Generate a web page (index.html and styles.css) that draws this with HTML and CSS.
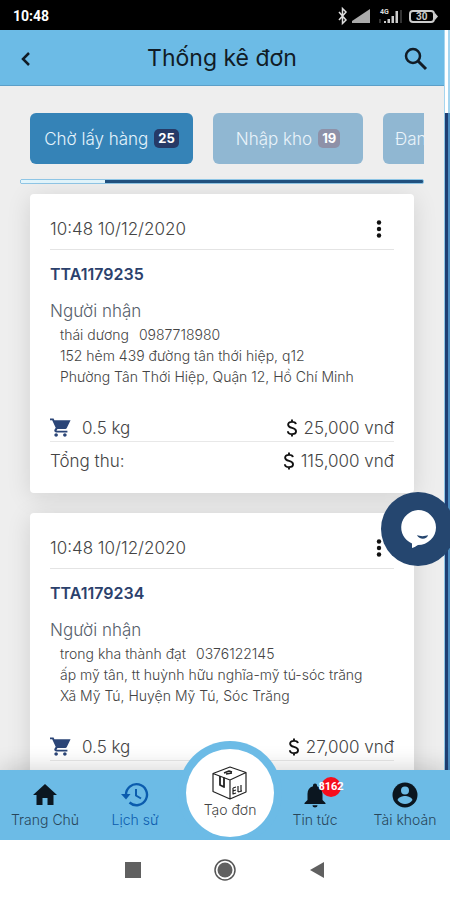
FILE: index.html
```html
<!DOCTYPE html>
<html lang="vi">
<head>
<meta charset="utf-8">
<meta name="viewport" content="width=device-width, initial-scale=1">
<title>Thống kê đơn</title>
<link rel="stylesheet" href="styles.css">
</head>
<body>
<svg class="defs" aria-hidden="true">
  <symbol id="cart" viewBox="0 0 24 24"><path d="M7 18c-1.100 0-2 .9-2 2s.9 2 2 2 2-.9 2-2-.9-2-2-2zM0 1v2h2.500l4 8.600-1.400 2.400c-.7 1.300.3 3 1.800 3h13v-2H7.400l1.100-2h9c.8 0 1.400-.4 1.700-1L23.500 3H5l-.9-2H0zm17 17c-1.100 0-2 .9-2 2s.9 2 2 2 2-.9 2-2-.9-2-2-2z"/></symbol>
  <symbol id="dollar" viewBox="0 0 14 22"><path d="M11.500 6.500C11.300 4.600 9.500 3.800 7 3.800S2.500 5 2.500 7.200c0 2.500 2.100 3.100 4.500 3.700s4.700 1.300 4.700 3.900c0 2.200-2 3.400-4.700 3.400s-4.700-1.200-4.800-3.400M7 1v3M7 18v3" fill="none" stroke="currentColor" stroke-width="2.200"/></symbol>
  <symbol id="dots" viewBox="0 0 6 20"><circle cx="3" cy="3.500" r="2.200"/><circle cx="3" cy="10" r="2.200"/><circle cx="3" cy="16.500" r="2.200"/></symbol>
</svg>
<div class="phone">
  <div class="status">
    <time>10:48</time>
    <svg class="status-icons" width="104" height="20" viewBox="0 0 104 20">
      <path d="M3 6l7 8-3.500 3.500V2.500L10 6l-7 8" fill="none" stroke="#ddd" stroke-width="1.500"/>
      <path d="M16 17v-2l18-12v14z" fill="#aaa"/>
      <path d="M48 17h2v-2h-2zM51.500 17h2.500v-4h-2.500zM55.500 17h2.500v-7h-2.500zM59.500 17h2.500V5h-2.500z" fill="#ccc"/>
      <path d="M43 17h2v-4h-2zM64 17h2V4h-2z" fill="#333"/>
      <text x="44" y="8" class="tiny">4G</text>
      <rect x="74" y="5" width="24" height="11" rx="3" fill="none" stroke="#ccc" stroke-width="2"/>
      <path d="M99 7l3 3.500-3 3.500z" fill="#ccc"/>
      <text x="80" y="14" class="charge">30</text>
    </svg>
  </div>
  <div class="view">
    <div class="page">
      <header class="appbar">
        <button class="icon-btn" aria-label="Quay lại"><svg width="24" height="28" viewBox="0 0 24 28"><path d="M15 9l-6 6 6 6" fill="none" stroke="currentColor" stroke-width="2.500"/></svg></button>
        <h1>Thống kê đơn</h1>
        <button class="icon-btn" aria-label="Tìm kiếm"><svg width="28" height="28" viewBox="0 0 28 28"><circle cx="11" cy="12" r="7" fill="none" stroke="currentColor" stroke-width="2.500"/><path d="M16 17l8 8" stroke="currentColor" stroke-width="3"/></svg></button>
      </header>
      <div class="tabs">
        <button class="tab active">Chờ lấy hàng <span class="count">25</span></button>
        <button class="tab">Nhập kho <span class="count">19</span></button>
        <button class="tab cut">Đang giao</button>
      </div>
      <div class="track"><span></span></div>
      <main class="orders">
        <article class="card">
          <div class="row when"><time>10:48 10/12/2020</time><button class="more" aria-label="Thêm"><svg width="6" height="20"><use href="#dots"/></svg></button></div>
          <h2>TTA1179235</h2>
          <h3>Người nhận</h3>
          <address>
            <p><span>thái dương</span><span>0987718980</span></p>
            <p>152 hẻm 439 đường tân thới hiệp, q12</p>
            <p>Phường Tân Thới Hiệp, Quận 12, Hồ Chí Minh</p>
          </address>
          <div class="row weight"><span class="item"><svg class="cart" width="21" height="22"><use href="#cart"/></svg>0.5 kg</span><span class="money"><svg width="12" height="20"><use href="#dollar"/></svg>25,000 vnđ</span></div>
          <div class="row total"><span>Tổng thu:</span><span class="money"><svg width="12" height="20"><use href="#dollar"/></svg>115,000 vnđ</span></div>
        </article>
        <article class="card">
          <div class="row when"><time>10:48 10/12/2020</time><button class="more" aria-label="Thêm"><svg width="6" height="20"><use href="#dots"/></svg></button></div>
          <h2>TTA1179234</h2>
          <h3>Người nhận</h3>
          <address>
            <p><span>trong kha thành đạt</span><span>0376122145</span></p>
            <p>ấp mỹ tân, tt huỳnh hữu nghĩa-mỹ tú-sóc trăng</p>
            <p>Xã Mỹ Tú, Huyện Mỹ Tú, Sóc Trăng</p>
          </address>
          <div class="row weight"><span class="item"><svg class="cart" width="21" height="22"><use href="#cart"/></svg>0.5 kg</span><span class="money"><svg width="12" height="20"><use href="#dollar"/></svg>27,000 vnđ</span></div>
          <div class="row total"><span class="money end"><svg width="12" height="20"><use href="#dollar"/></svg></span></div>
        </article>
      </main>
    </div>
    <div class="scroll"><span></span></div>
    <button class="chat" aria-label="Trò chuyện"><svg width="38" height="40" viewBox="0 0 38 40"><path d="M19 1a18 17.500 0 0 1 0 35c-1.500 1-4 2.500-6 3v-4.500A18 17.500 0 0 1 19 1z" fill="#fff"/><path d="M18 26c3 1.500 8 1.500 11 0-1 5-9 5-11 0z" fill="#25466f"/></svg></button>
  </div>
  <nav class="bottom">
    <a href="#"><svg width="26" height="26" viewBox="0 0 26 26"><path d="M13 2l12 11h-3.500v10h-6v-7h-5v7h-6V13H1z" fill="#0b1620"/></svg>Trang Chủ</a>
    <a href="#" class="current"><svg width="28" height="26" viewBox="0 0 28 26"><path d="M5 13a10.500 10.500 0 1 1 3.500 7.500" fill="none" stroke="currentColor" stroke-width="2.400"/><path d="M0 12h9.500L5 17.500z" fill="currentColor"/><path d="M15 7v6.500l5 3" fill="none" stroke="currentColor" stroke-width="2"/></svg>Lịch sử</a>
    <a href="#" class="create"><svg width="36" height="36" viewBox="0 0 36 36" fill="none" stroke="#222" stroke-width="1.200" stroke-linejoin="round"><path d="M1 8.500L18 2l16 5.500V27l-16 7-17-7.500zM1 8.500L18 15l16-7.500M18 15v19"/><path d="M8 11v9l4 2v-9.500" stroke-width="1.800"/><path d="M12 8l5-2 3 1M14 9l6-1" stroke-width="1.500"/><path d="M21 23v6l3-1M21 23l3-1M21 26l3-1M26 21v6M29 20v6M26 27l4-1"/></svg>Tạo đơn</a>
    <a href="#" class="news"><svg width="24" height="26" viewBox="0 0 24 26"><path d="M12 1.500c1.200 0 2 .8 2 2v.7c3.600 1 5.500 4 5.500 7.800v6l3 3V22h-21v-1l3-3v-6c0-3.800 1.900-6.800 5.500-7.800v-.7c0-1.200.8-2 2-2zM9.500 23.300h5c0 3-5 3-5 0z" fill="#0b1620"/></svg><span class="badge">8162</span>Tin tức</a>
    <a href="#"><svg width="26" height="26" viewBox="0 0 26 26"><circle cx="13" cy="13" r="12.500" fill="#0b1620"/><circle cx="13" cy="8.500" r="4" fill="#6cbbe6"/><path d="M5.500 18c1-3 5-4 7.500-4s6.500 1 7.500 4c-3.500 5.300-11.500 5.300-15 0z" fill="#6cbbe6"/></svg>Tài khoản</a>
  </nav>
  <div class="system">
    <button aria-label="Gần đây"><svg width="16" height="16"><rect width="16" height="16" fill="#606060"/></svg></button>
    <button aria-label="Màn hình chính"><svg width="22" height="22" viewBox="0 0 22 22"><circle cx="11" cy="11" r="10" fill="none" stroke="#555" stroke-width="1.500"/><circle cx="11" cy="11" r="7.500" fill="#606060"/></svg></button>
    <button aria-label="Trở về"><svg width="16" height="18"><path d="M15 1v16L1 9z" fill="#606060"/></svg></button>
  </div>
</div>
</body>
</html>
```
FILE: styles.css
```css
* { box-sizing: border-box; margin: 0; padding: 0; }
body { font-family: Inter, "Noto Sans", sans-serif; font-weight: 300; color: #444; background: #fff; }
button { font: inherit; border: 0; background: none; color: inherit; }
a { text-decoration: none; color: inherit; }
svg { display: block; flex: none; }
.defs { position: absolute; width: 0; height: 0; }

.phone { display: flex; flex-direction: column; height: 100vh; overflow: hidden; }

.status { flex: none; height: 30px; background: #000; color: #fff; display: flex; align-items: center; justify-content: space-between; padding: 2px 10px 0 13px; font: 700 14px Roboto, sans-serif; }
.tiny { font-size: 7px; fill: #ddd; }
.charge { font-size: 10px; fill: #ccc; }

.view { flex: 1; min-height: 0; display: flex; position: relative; }
.page { flex: 1; min-width: 0; background: #eee; overflow: hidden; }

.appbar { height: 56px; background: #6cbbe6; border-bottom: 1px solid #5c9fc8; display: flex; align-items: center; justify-content: space-between; padding: 0 14px; color: #111c26; }
.appbar h1 { font-size: 23px; font-weight: 400; }
.icon-btn { width: 28px; height: 28px; display: flex; align-items: center; }

.tabs { display: flex; gap: 20px; margin: 27px 20px 0 20px; padding-left: 10px; overflow: hidden; }
.tab { flex: none; height: 51px; padding: 0 12px; border-radius: 6px; background: #90b7d2; color: #e9f3fa; font-size: 17px; display: flex; align-items: center; justify-content: center; gap: 6px; min-width: 150px; }
.tab.active { background: #3583b7; min-width: 163px; color: #e4f3fc; }
.tab.cut { justify-content: flex-start; }
.count { background: #8e91a8; color: #fff; font-size: 13px; font-weight: 700; line-height: 19px; padding: 0 4px; border-radius: 5px; }
.active .count { background: #263a67; }

.track { height: 5px; margin: 15px 20px 10px 20px; background: #21517f; border: 1px solid #8fc6e6; border-radius: 2px; display: flex; }
.track span { width: 21%; background: #e2f5fc; }

.orders { padding: 0 30px; display: flex; flex-direction: column; gap: 20px; }
.card { background: #fff; border-radius: 4px; padding: 15px 20px 13px; box-shadow: 0 4px 24px rgba(0, 0, 0, .12); font-size: 17px; }
.row { display: flex; align-items: center; justify-content: space-between; }
.when { height: 41px; border-bottom: 1px solid #e4e4e4; }
.more { width: 30px; height: 30px; display: flex; align-items: center; justify-content: center; fill: #111; }
.card h2 { font-size: 16px; font-weight: 600; line-height: 48px; color: #2b416c; }
.card h3 { font-size: 17px; font-weight: 300; line-height: 26px; color: #56606c; }
address { font-style: normal; font-size: 14px; line-height: 21px; padding-left: 10px; white-space: nowrap; }
address p { display: flex; gap: 10px; }
.weight { height: 55px; padding-top: 28px; border-bottom: 1px solid #e8e8e8; }
.total { height: 38px; }
.item { display: flex; align-items: center; gap: 11px; }
.cart { fill: #2b4577; }
.money { display: flex; align-items: center; gap: 6px; }
.money svg { color: #111; }
.money.end { margin: 0 0 0 auto; padding-right: 94px; }

.scroll { flex: none; width: 6px; background: linear-gradient(90deg, #8fc6e6 1px, #1f3f73 1px 4px, #4b8cc0 4px); }
.scroll span { display: block; height: 83px; background: #fff; border: solid #a5d5ef; border-width: 0 2px 0 1px; }

.chat { position: absolute; right: -5px; top: 462px; width: 74px; height: 74px; border-radius: 50%; background: #25466f; display: flex; align-items: center; justify-content: center; }

.bottom { flex: none; position: relative; height: 70px; background: #6cbbe6; box-shadow: 0 -4px 20px rgba(0, 0, 0, .15); display: grid; grid-template: 70px / repeat(5, minmax(0, 1fr)); }
.bottom a { position: relative; display: flex; flex-direction: column; align-items: center; gap: 3px; padding-top: 12px; font-size: 14px; line-height: 18px; color: #28465a; white-space: nowrap; }
.bottom .current { color: #0b5cae; }
.bottom .create { justify-self: center; align-self: end; width: 88px; height: 88px; margin: 0 0 3px 10px; padding-top: 16px; gap: 0; border-radius: 50%; background: #fff; box-shadow: 0 0 0 8px #6cbbe6; color: #444; }
.badge { position: absolute; left: 50%; top: 7px; margin-left: 6px; width: 20px; height: 20px; border-radius: 50%; background: #f60d1c; color: #fff; font: 700 11px/20px Roboto, sans-serif; display: flex; justify-content: center; }

.system { flex: none; position: relative; background: #fff; height: 60px; display: flex; align-items: center; justify-content: center; gap: 62px; }
.system button { width: 30px; height: 30px; display: flex; align-items: center; justify-content: center; }
```
